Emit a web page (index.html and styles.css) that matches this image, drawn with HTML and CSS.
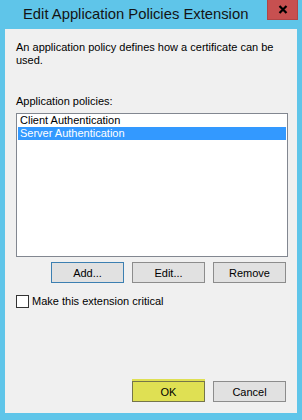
FILE: index.html
```html
<!DOCTYPE html>
<html lang="en">
<head>
    <meta charset="UTF-8">
    <title>Edit Application Policies Extension</title>
    <link rel="stylesheet" href="styles.css">
</head>
<body>

<div class="window">
    <div class="titlebar">
        <span class="title">Edit Application Policies Extension</span>
        <button class="close-btn" aria-label="Close">
            <svg width="10" height="9" viewBox="0 0 10 9">
                <path d="M1.5 1 L8.5 8 M8.5 1 L1.5 8" stroke="#000" stroke-width="2.2" fill="none"/>
            </svg>
        </button>
    </div>

    <div class="client">
        <p class="desc">An application policy defines how a certificate can be used.</p>

        <div class="field-label">Application policies:</div>
        <ul class="listbox">
            <li>Client Authentication</li>
            <li class="selected">Server Authentication</li>
        </ul>

        <div class="btn-row">
            <button class="btn focused">Add...</button>
            <button class="btn">Edit...</button>
            <button class="btn">Remove</button>
        </div>

        <label class="check">
            <span class="check-box"></span>
            <span>Make this extension critical</span>
        </label>

        <div class="btn-row bottom">
            <button class="btn ok">OK</button>
            <button class="btn">Cancel</button>
        </div>
    </div>
</div>

</body>
</html>
```

FILE: styles.css
```css
body {
    margin: 0;
    background-color: #5fc5e9;
    font-family: "Liberation Sans", Arial, sans-serif;
    font-size: 11px;
    color: #000;
}

.window {
    width: 302px;
    height: 420px;
    display: flex;
    flex-direction: column;
}

.titlebar {
    height: 29px;
    display: flex;
    align-items: flex-start;
    justify-content: space-between;
    padding-left: 23px;
    box-sizing: border-box;
}

.title {
    font-size: 14.8px;
    line-height: 15px;
    margin-top: 7px;
    color: #141414;
}

.close-btn {
    width: 31px;
    height: 20px;
    margin-right: 4px;
    border: 1px solid #b04545;
    border-top: none;
    background-color: #c75050;
    padding: 0;
    display: flex;
    align-items: center;
    justify-content: center;
}

.client {
    height: 384px;
    margin: 0 5px;
    background-color: #f0f0f0;
    padding: 12px 9px 11px 11px;
    box-sizing: border-box;
    display: flex;
    flex-direction: column;
}

.desc {
    margin: 0;
    line-height: 13px;
}

.field-label {
    margin-top: 28px;
    line-height: 13px;
}

.listbox {
    list-style: none;
    margin: 5px 0 0;
    padding: 0 1px;
    height: 144px;
    box-sizing: border-box;
    background-color: white;
    border: 1px solid #828790;
}

.listbox li {
    line-height: 13px;
    height: 13px;
    padding-left: 2px;
}

.listbox .selected {
    background-color: #3399ff;
    color: white;
}

.btn-row {
    display: flex;
    justify-content: flex-end;
    gap: 8px;
    padding-right: 2px;
    margin-top: 5px;
}

.btn {
    width: 73px;
    height: 21px;
    box-sizing: border-box;
    border: 1px solid #8c8c8c;
    background-color: #e1e1e1;
    font-family: inherit;
    font-size: 11px;
    color: #000;
    padding: 0;
}

.btn.focused {
    border-color: #3c7fb1;
}

.btn.ok {
    background-color: #dfe053;
    border-color: #75754a;
    box-shadow: 0 -2px 0 #dfe053;
}

.check {
    display: flex;
    align-items: center;
    gap: 3px;
    margin-top: 12px;
    line-height: 13px;
}

.check-box {
    width: 13px;
    height: 13px;
    box-sizing: border-box;
    border: 1px solid #333;
    background-color: white;
}

.btn-row.bottom {
    margin-top: auto;
}
```
